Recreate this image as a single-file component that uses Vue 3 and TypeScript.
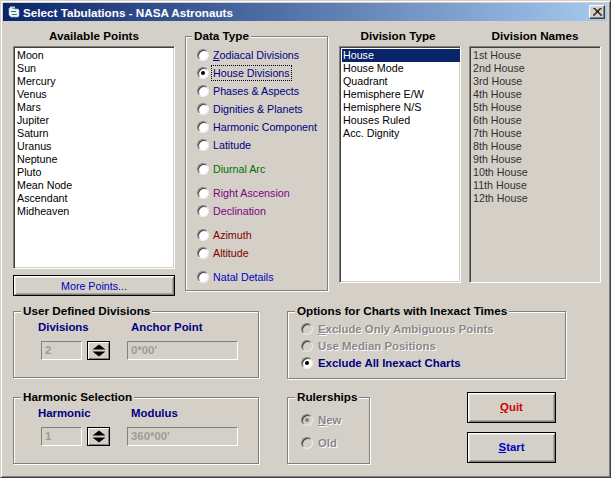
<script setup lang="ts">
interface Opt { label: string; color: string; gap?: boolean; on?: boolean; focus?: boolean; ul?: string }
const points = ['Moon','Sun','Mercury','Venus','Mars','Jupiter','Saturn','Uranus','Neptune','Pluto','Mean Node','Ascendant','Midheaven']
const types = ['House','House Mode','Quadrant','Hemisphere E/W','Hemisphere N/S','Houses Ruled','Acc. Dignity']
const names = ['1st','2nd','3rd','4th','5th','6th','7th','8th','9th','10th','11th','12th'].map(n => n + ' House')
const opts: Opt[] = [
  { label: 'odiacal Divisions', ul: 'Z', color: 'navy' },
  { label: 'House Divisions', color: 'navy', on: true, focus: true },
  { label: 'Phases & Aspects', color: 'navy' },
  { label: 'Dignities & Planets', color: 'navy' },
  { label: 'Harmonic Component', color: 'navy' },
  { label: 'Latitude', color: 'navy' },
  { label: 'Diurnal Arc', color: 'green', gap: true },
  { label: 'Right Ascension', color: 'purple', gap: true },
  { label: 'Declination', color: 'purple' },
  { label: 'Azimuth', color: 'maroon', gap: true },
  { label: 'Altitude', color: 'maroon' },
  { label: 'Natal Details', color: 'blue', gap: true },
]
</script>

<template>
  <div class="window">
    <header class="title">
      <svg class="app-icon" width="13" height="12" viewBox="0 0 13 12">
        <path d="M1 2h3l1 1h5l1 1v6l-1 1H3L1 9z" fill="#eef6f6" stroke="#9fc0c8" stroke-width=".6" />
        <path d="M2 0.5h5v2H2z" fill="#bfd8dc" />
        <path d="M3 5h5v1H3zM4 8h5v1H4z" fill="#456a80" />
      </svg>
      <span class="caption">Select Tabulations - NASA Astronauts</span>
      <button class="close" aria-label="Close">
        <svg width="9" height="8" viewBox="0 0 9 8"><path d="M0.5 0 L8.5 8 M8.5 0 L0.5 8 M1.5 0 L9 7.5 M7.5 0 L0 7.5" stroke="#000" stroke-width="1" fill="none" /></svg>
      </button>
    </header>

    <main class="body">
      <section class="top">
        <div class="col col-points">
          <h2>Available Points</h2>
          <ul class="list list-points"><li v-for="p in points" :key="p">{{ p }}</li></ul>
          <button class="btn more">More Points...</button>
        </div>

        <fieldset class="group data">
          <legend>Data Type</legend>
          <div class="data-inner">
            <div
              v-for="o in opts"
              :key="o.label"
              class="row"
              :class="[o.color, { gap: o.gap }]"
            >
              <span class="radio" :class="{ on: o.on }"></span>
              <span class="lbl" :class="{ focus: o.focus }"><u v-if="o.ul">{{ o.ul }}</u>{{ o.label }}</span>
            </div>
          </div>
        </fieldset>

        <div class="col col-type">
          <h2>Division Type</h2>
          <ul class="list list-tall">
            <li v-for="(t, i) in types" :key="t" :class="{ sel: i === 0 }">{{ t }}</li>
          </ul>
        </div>

        <div class="col col-names">
          <h2>Division Names</h2>
          <ul class="list list-tall off"><li v-for="n in names" :key="n">{{ n }}</li></ul>
        </div>
      </section>

      <section class="bottom">
        <div class="stack left">
          <fieldset class="group sub">
            <legend>User Defined Divisions</legend>
            <div class="fields">
              <div class="f1"><label>Divisions</label><div class="inline"><div class="input small">2</div><button class="spin"><svg width="16" height="13" viewBox="0 0 16 13"><path d="M8 0.5 L14.5 5.5 H1.5Z M8 12.5 L14.5 7.5 H1.5Z" fill="#000"/></svg></button></div></div>
              <div class="f2"><label>Anchor Point</label><div class="input wide">0*00'</div></div>
            </div>
          </fieldset>
          <fieldset class="group sub">
            <legend>Harmonic Selection</legend>
            <div class="fields">
              <div class="f1"><label>Harmonic</label><div class="inline"><div class="input small">1</div><button class="spin"><svg width="16" height="13" viewBox="0 0 16 13"><path d="M8 0.5 L14.5 5.5 H1.5Z M8 12.5 L14.5 7.5 H1.5Z" fill="#000"/></svg></button></div></div>
              <div class="f2"><label>Modulus</label><div class="input wide">360*00'</div></div>
            </div>
          </fieldset>
        </div>

        <div class="stack mid">
          <fieldset class="group opts">
            <legend>Options for Charts with Inexact Times</legend>
            <div class="opts-inner">
              <div class="brow dis"><span class="radio dim"></span><span><u>E</u>xclude Only Ambiguous Points</span></div>
              <div class="brow dis"><span class="radio dim"></span><span>Use Median Positions</span></div>
              <div class="brow act"><span class="radio on"></span><span>Exclude All Inexact Charts</span></div>
            </div>
          </fieldset>
          <fieldset class="group rulers">
            <legend>Rulerships</legend>
            <div class="rulers-inner">
              <div class="brow dis r"><span class="radio dim on"></span><span><u>N</u>ew</span></div>
              <div class="brow dis r"><span class="radio dim"></span><span>Old</span></div>
            </div>
          </fieldset>
        </div>

        <div class="actions">
          <button class="btn action quit"><u>Q</u>uit</button>
          <button class="btn action start"><u>S</u>tart</button>
        </div>
      </section>
    </main>
  </div>
</template>

<style>
html, body { margin: 0; background: #d4d0c8; }
</style>

<style scoped>
.window {
  box-sizing: border-box; width: 611px; height: 478px;
  background: #d4d0c8; color: #000;
  font-family: "Liberation Sans", Arial, sans-serif; font-size: 10.7px;
  border: 1px solid; border-color: #d4d0c8 #404040 #404040 #d4d0c8;
  box-shadow: inset 1px 1px 0 #fff, inset -1px -1px 0 #808080;
  padding: 2px 3px 3px 2px;
  display: flex; flex-direction: column;
}
.title {
  height: 18px; flex: none; display: flex; align-items: center;
  padding: 0 2px 0 5px; color: #fff; font-weight: 700; font-size: 11.7px;
  background: linear-gradient(90deg, #0a246a, #a6caf0);
}
.app-icon { flex: none; }
.caption { margin-left: 2px; }
.close {
  margin-left: auto; width: 16px; height: 14px; padding: 0; flex: none;
  display: flex; align-items: center; justify-content: center;
  background: #d4d0c8; border: 1px solid; border-color: #fff #404040 #404040 #fff;
  box-shadow: inset -1px -1px 0 #808080;
}
.body { flex: 1; padding: 8px 0 0 10px; }
.top { display: flex; height: 267px; }
.col { display: flex; flex-direction: column; }
.col-points { width: 162px; }
.col-type { width: 122px; margin-left: 11px; }
.col-type h2 { padding-right: 4px; }
.col-names { width: 132px; margin-left: 8px; }
h2 { margin: 0 0 3px; height: 14px; line-height: 14px; font-size: 11.7px; font-weight: 700; text-align: center; }
.list {
  list-style: none; margin: 0; box-sizing: border-box;
  background: #fff; overflow: hidden;
  border: 1px solid; border-color: #808080 #fff #fff #808080;
  box-shadow: inset 1px 1px 0 #404040, inset -1px -1px 0 #d4d0c8;
  padding: 2px;
}
.list li { height: 13px; line-height: 13px; padding-left: 1px; white-space: nowrap; }
.list-points { height: 224px; }
.list-tall { height: 237px; padding-right: 0; }
.list.off { background: #d4d0c8; color: #303030; }
.list .sel { background: #0a246a; color: #fff; }
.btn {
  font: inherit; padding: 0; background: #d4d0c8; box-sizing: border-box;
  border: 1px solid #000;
  box-shadow: inset 1px 1px 0 #fff, inset -1px -1px 0 #808080, inset 2px 2px 0 #e8e6e0, inset -2px -2px 0 #a8a49c;
}
.more { margin-top: 6px; height: 21px; color: #0000c0; }
.group {
  margin: 0; padding: 0; box-sizing: border-box; min-width: 0;
  border: 1px solid #808080;
  box-shadow: inset 1px 1px 0 #fff, 1px 1px 0 #fff;
}
.group legend {
  padding: 0 2px; margin-left: 7px; height: 14px; line-height: 14px;
  font-size: 11.7px; font-weight: 700; background: #d4d0c8; white-space: nowrap;
}
.data { width: 143px; height: 262px; margin-left: 10px; }
.data legend { margin-left: 6px; }
.data-inner { padding: 3px 0 0 11px; }
.row { display: flex; align-items: center; height: 18px; gap: 2px; }
.row.gap { margin-top: 6px; }
.navy { color: #000080; }
.green { color: #007000; }
.purple { color: #800080; }
.maroon { color: #800000; }
.blue { color: #0000c0; }
.lbl { padding: 0 1px; border: 1px solid transparent; white-space: nowrap; line-height: 14px; }
.lbl.focus { border: 1px dotted #000; }
.radio {
  position: relative; flex: none; display: inline-block; box-sizing: border-box;
  width: 12px; height: 12px; border-radius: 50%; background: #fff;
  border: 1px solid; border-color: #808080 #eee #eee #808080;
  box-shadow: inset 1px 1px 0 #404040;
}
.radio.on::after {
  content: ""; position: absolute; left: 3px; top: 3px;
  width: 4px; height: 4px; border-radius: 50%; background: #000;
}
.radio.dim { background: #d4d0c8; }
.radio.dim.on::after { background: #808080; }
.bottom { display: flex; margin-top: 8px; font-size: 11.4px; }
.stack { display: flex; flex-direction: column; gap: 12px; }
.left { width: 246px; }
.mid { width: 279px; margin-left: 28px; }
.sub { height: 74px; }
.fields { display: flex; padding-top: 2px; }
.f1 { width: 113px; padding-left: 24px; box-sizing: border-box; }
label { display: block; height: 14px; line-height: 14px; font-weight: 700; color: #000080; }
.f1 .inline { display: flex; align-items: center; margin: 7px 0 0 3px; gap: 5px; }
.f2 label { margin-left: 4px; }
.input {
  box-sizing: border-box; height: 19px; line-height: 17px; padding-left: 3px;
  border: 1px solid; border-color: #808080 #fff #fff #808080;
  color: #a09c94; font-weight: 700;
}
.f2 .input { margin-top: 7px; }
.small { width: 41px; }
.wide { width: 111px; }
.spin {
  width: 23px; height: 19px; padding: 0; box-sizing: border-box; background: #d4d0c8; flex: none;
  display: flex; align-items: center; justify-content: center;
  border: 1px solid #000; box-shadow: inset 1px 1px 0 #fff, inset -1px -1px 0 #808080;
}
.opts { height: 75px; }
.opts-inner { padding: 2px 0 0 13px; }
.rulers { height: 74px; width: 83px; margin-top: -1px; }
.rulers-inner { padding: 4px 0 0 13px; }
.brow { display: flex; align-items: center; gap: 5px; height: 17px; font-weight: 700; white-space: nowrap; }
.dis { color: #888; text-shadow: 1px 1px 0 #fff; }
.act { color: #000080; }
.r { height: 23px; }
.actions { display: flex; flex-direction: column; gap: 9px; width: 89px; margin-left: -99px; margin-top: 88px; }
.action { height: 31px; padding-bottom: 2px; font-weight: 700; }
.quit { color: #d00000; }
.start { color: #0000c0; }
</style>
